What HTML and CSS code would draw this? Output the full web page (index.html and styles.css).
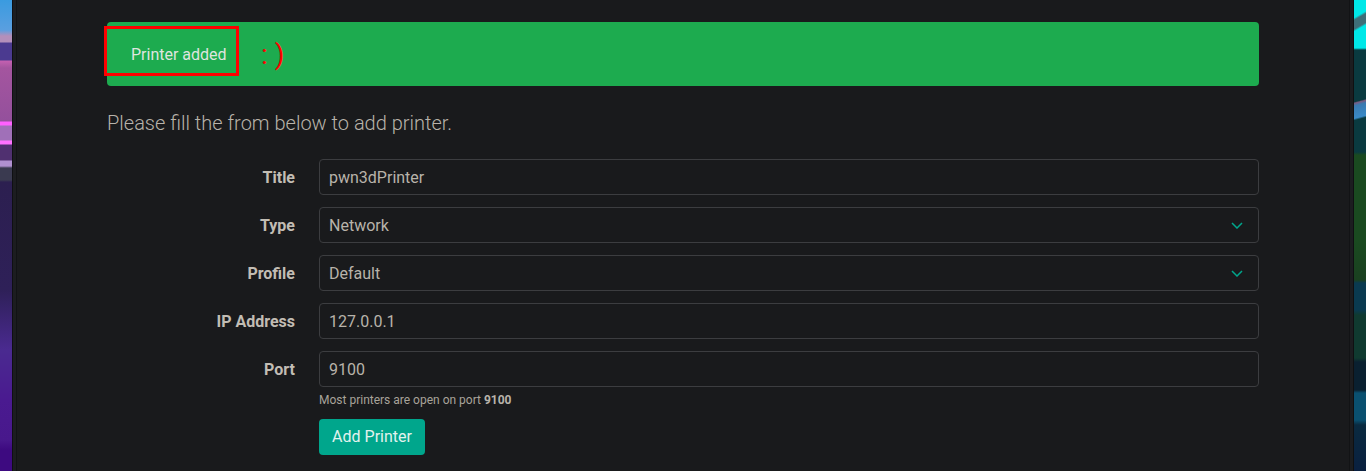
FILE: index.html
```html
<!DOCTYPE html>
<html lang="en">
<head>
    <meta charset="UTF-8">
    <meta name="viewport" content="width=device-width, initial-scale=1.0">
    <title>Add Printer</title>
    <link rel="stylesheet" href="styles.css">
</head>
<body>
    <div class="panel">
        <div class="content">
            <div class="alert">
                Printer added
                <!-- red marks drawn over the screenshot -->
                <span class="mark-box"></span>
                <span class="mark-smile">: )</span>
            </div>

            <p class="lead">Please fill the from below to add printer.</p>

            <form class="printer-form">
                <label class="field-label" for="title">Title</label>
                <div class="field">
                    <input class="control" id="title" type="text" value="pwn3dPrinter">
                </div>

                <label class="field-label" for="type">Type</label>
                <div class="field">
                    <select class="control" id="type">
                        <option>Network</option>
                    </select>
                    <svg class="chevron" viewBox="0 0 12 7"><path d="M1 1l5 5 5-5"/></svg>
                </div>

                <label class="field-label" for="profile">Profile</label>
                <div class="field">
                    <select class="control" id="profile">
                        <option>Default</option>
                    </select>
                    <svg class="chevron" viewBox="0 0 12 7"><path d="M1 1l5 5 5-5"/></svg>
                </div>

                <label class="field-label" for="ip">IP Address</label>
                <div class="field">
                    <input class="control" id="ip" type="text" value="127.0.0.1">
                </div>

                <label class="field-label" for="port">Port</label>
                <div class="field">
                    <input class="control" id="port" type="text" value="9100">
                    <small class="help">Most printers are open on port <strong>9100</strong></small>
                    <button class="btn" type="button">Add Printer</button>
                </div>
            </form>
        </div>
    </div>
</body>
</html>
```

FILE: styles.css
```css
html, body {
    height: 471px;
    overflow: hidden;
}
body {
    margin: 0;
    font-family: Roboto, "Liberation Sans", sans-serif;
    font-size: 16px;
    color: #b8b3aa;
    background-color: #191a1c;
    background-image:
        linear-gradient(150deg, transparent 0, transparent 24%, #3f6f78 30%, #3f6f78 52%, transparent 58%),
        linear-gradient(165deg, transparent 0, transparent 30%, #7a5a80 34%, #3a7ab0 42%, #3a8ac8 80%, transparent 86%),
        linear-gradient(180deg,
            #3a9be0 0, #5a9fe0 30px, #b48fbb 36px, #b48fbb 42px,
            #4b3a90 43px, #4b3a90 60px, #c460b0 61px, #a4559f 68px,
            #94509c 121px, #ff60ff 122px, #ff60ff 125px, #a070b8 126px,
            #a070b8 140px, #ff70ff 141px, #ff70ff 144px, #503070 145px,
            #503070 160px, #b090d0 161px, #b090d0 166px, #3a3a50 168px,
            #3a3a50 180px, #2c1f50 182px, #2e2058 290px, #4a2a90 350px,
            #4a1a90 400px, #48188c 440px, #3d0a80 450px, #3d0a80 471px),
        linear-gradient(180deg,
            #00e8e8 0, #00e8e8 48px, #0a3a40 50px,
            #0a3a40 152px, #1a4a20 155px, #1a4a20 240px, #1a4020 280px,
            #0a3a50 283px, #0a3a50 310px, #103a30 315px, #103a30 358px,
            #0a2030 362px, #0a2030 390px, #0a5070 393px, #0a5070 420px,
            #0a2a40 425px, #0a2040 471px);
    background-size: 12px 34px, 12px 30px, 12px 471px, 12px 471px;
    background-position: right 0 top 8px, right 0 top 92px, left top, right top;
    background-repeat: no-repeat;
}
.panel {
    margin: 0 12px;
    height: 471px;
    padding: 0 3px;
    box-sizing: border-box;
    background: #1c1d20;
    border-left: 1px solid #0f1012;
    border-right: 1px solid #0f1012;
}
.content {
    height: 100%;
    box-sizing: border-box;
    background: #191a1c;
    border-left: 1px solid #121315;
    border-right: 1px solid #121315;
    padding: 22px 90px 0;
}
.alert {
    position: relative;
    box-sizing: border-box;
    height: 64px;
    padding: 23px 24px 0;
    line-height: 20px;
    color: #dfe5df;
    background: #1dab4f;
    border-radius: 4px;
}
.mark-box {
    position: absolute;
    left: -3px;
    top: 4px;
    width: 135px;
    height: 50px;
    box-sizing: border-box;
    border: 3px solid #f00;
}
.mark-smile {
    position: absolute;
    left: 154px;
    top: 16px;
    font-size: 28px;
    line-height: 34px;
    color: #f00;
}
.lead {
    margin: 24px 0 23px;
    font-size: 20px;
    font-weight: 300;
    line-height: 26px;
    color: #b8b3aa;
}
.printer-form {
    display: grid;
    grid-template-columns: 188px 1fr;
    column-gap: 24px;
    row-gap: 12px;
}
.field-label {
    height: 36px;
    font-weight: 700;
    line-height: 38px;
    text-align: right;
    color: #c2bdb4;
}
.field {
    position: relative;
}
.control {
    display: block;
    width: 100%;
    height: 36px;
    box-sizing: border-box;
    padding: 0 9px;
    font: inherit;
    color: #b8b3aa;
    background: #191a1c;
    border: 1px solid #3c3d40;
    border-radius: 4px;
    outline: none;
    appearance: none;
}
.chevron {
    position: absolute;
    top: 15px;
    right: 16px;
    width: 12px;
    height: 7px;
    fill: none;
    stroke: #00a68c;
    stroke-width: 1.5;
}
.help {
    display: block;
    margin-top: 6px;
    font-size: 12px;
    line-height: 15px;
    color: #a8a39a;
}
.help strong {
    color: #b8b3aa;
}
.btn {
    display: block;
    margin-top: 11px;
    height: 36px;
    width: 106px;
    padding: 0 0 2px;
    font: inherit;
    color: #e2f2ee;
    background: #00a68c;
    border: none;
    border-radius: 4px;
}
```
